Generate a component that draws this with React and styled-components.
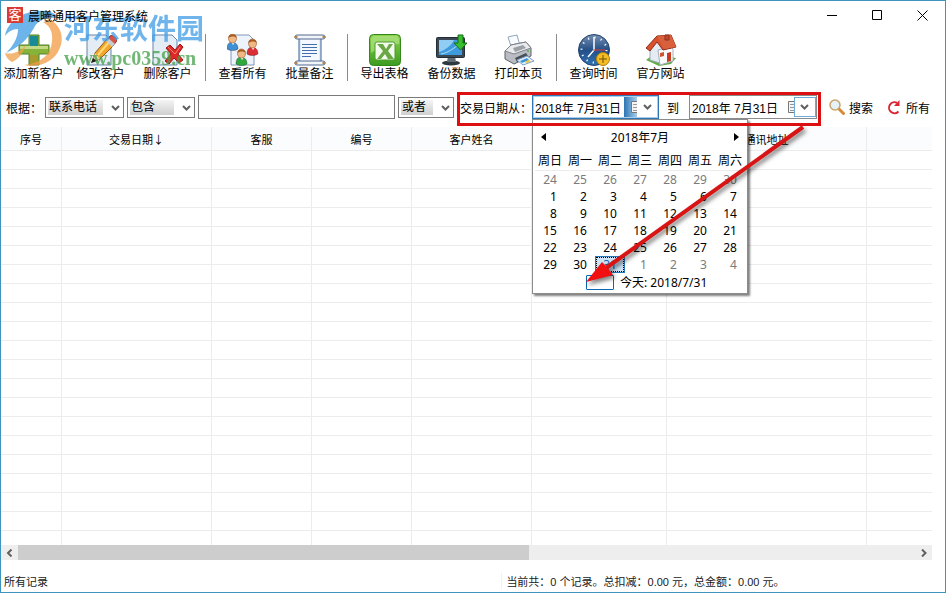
import React from 'react'
import styled, { createGlobalStyle, css } from 'styled-components'

const GlobalStyle = createGlobalStyle`
  * {
    box-sizing: border-box;
  }
  body {
    margin: 0;
    background: #fff;
    color: #000;
    font-family: 'Liberation Sans', 'Noto Sans CJK SC', sans-serif;
    font-size: 12px;
  }
  button, input, select {
    font: inherit;
    color: inherit;
  }
`

const Window = styled.div`
  display: flex;
  flex-direction: column;
  height: 100vh;
  background: #fff;
  outline: 1px solid #3f94bd;
  outline-offset: -1px;
  overflow: hidden;
  position: relative;
`

const TitleBar = styled.header`
  position: relative;
  z-index: 1;
  display: flex;
  align-items: center;
  height: 30px;
  padding: 0 1px 0 7px;
  flex-shrink: 0;
`

const AppBadge = styled.span`
  width: 16px;
  height: 16px;
  margin-right: 5px;
  background: #d93a36;
  color: #fff;
  font-size: 13px;
  line-height: 16px;
  text-align: center;
`

const Title = styled.h1`
  flex: 1;
  margin: 0;
  font-size: 12px;
  font-weight: 400;
`

const plainButton = css`
  padding: 0;
  border: 0;
  background: none;
  cursor: pointer;
`

const CaptionButton = styled.button`
  ${plainButton}
  width: 45px;
  height: 30px;

  svg {
    display: block;
    margin: auto;
  }
`

const ToolBar = styled.nav`
  display: flex;
  height: 56px;
  flex-shrink: 0;
`

const ToolButton = styled.button`
  ${plainButton}
  display: flex;
  flex-direction: column;
  align-items: center;
  width: 67px;
  padding-top: 4px;
  line-height: 17px;
  white-space: nowrap;
`

const ToolSeparator = styled.span`
  width: 1px;
  height: 47px;
  margin: 4px 3px 0 4px;
  background: #8a8a8a;
`

const Watermark = styled.div`
  position: absolute;
  top: 8px;
  left: 4px;
  display: flex;
  pointer-events: none;
  opacity: 0.75;
`

const WatermarkText = styled.div`
  display: flex;
  flex-direction: column;
  padding-top: 4px;
  margin-left: 2px;
  color: #3f9de6;
  font-size: 28px;
  font-weight: 700;
  line-height: 36px;

  small {
    color: #43a047;
    font: bold 20px/20px 'Liberation Serif', serif;
  }
`

const FilterBar = styled.form`
  display: flex;
  align-items: center;
  gap: 3px;
  height: 34px;
  margin: 6px 0 1px;
  padding: 0 11px 4px 6px;
  flex-shrink: 0;
  white-space: nowrap;
`

const SelectBox = styled.span`
  position: relative;
  width: ${({ $width }) => $width}px;
  height: 21px;

  select {
    appearance: none;
    width: 100%;
    height: 100%;
    padding: 0 3px;
    border: 1px solid #7a7a7a;
    border-radius: 0;
    background: linear-gradient(#f4f4f4, #cfcfcf) 2px 2px / calc(100% - 22px) 15px no-repeat #fff;
  }

  svg {
    position: absolute;
    top: 7px;
    right: 4px;
    pointer-events: none;
  }
`

const Keyword = styled.input`
  flex: 1;
  min-width: 60px;
  height: 24px;
  padding: 0 4px;
  border: 1px solid #7a7a7a;
`

const DateRange = styled.fieldset`
  position: relative;
  display: flex;
  align-items: center;
  height: 30px;
  margin: 0;
  padding: 0 4px 0 3px;
  border: 0;

  &::after {
    content: '';
    position: absolute;
    inset: 0 0 -4px;
    z-index: 3;
    border: 3px solid #dc1010;
    pointer-events: none;
  }
`

const RangeLabel = styled.label`
  margin: ${({ $between }) => ($between ? '0 10px 0 8px' : 0)};
`

const DateField = styled.span`
  position: relative;
  display: flex;
  align-items: center;
  height: 24px;
  border: 1px solid ${({ $open }) => ($open ? '#2f78b7' : '#8b8b8b')};
  box-shadow: inset 0 0 0 1px ${({ $open }) => ($open ? '#a9cdea' : '#fff')};

  input {
    width: ${({ $open }) => ($open ? 91 : 98)}px;
    height: 18px;
    padding: 0 0 0 2px;
    border: 0;
    outline: 0;
    background: none;
  }
`

const DateToggle = styled.button`
  ${plainButton}
  display: flex;
  align-items: center;
  height: 20px;
`

const CalendarSlot = styled.span`
  display: flex;
  align-items: center;
  justify-content: flex-end;
  width: ${({ $open }) => ($open ? 13 : 6)}px;
  height: 20px;
  overflow: hidden;
  background: ${({ $open }) => ($open ? 'linear-gradient(90deg, #2d75b3, #a8cdea)' : '#fff')};
`

const ArrowSlot = styled.span`
  display: flex;
  align-items: center;
  justify-content: center;
  width: ${({ $open }) => ($open ? 21 : 22)}px;
  height: 20px;
  border: ${({ $open }) => ($open ? 0 : '1px solid #6ea9d8')};
`

const LinkButton = styled.button`
  ${plainButton}
  display: flex;
  align-items: center;
  gap: 4px;
  padding: 0 5px;
`

const Popup = styled.div`
  position: absolute;
  top: 23px;
  left: -1px;
  z-index: 2;
  width: 216px;
  padding: 8px 2px 2px;
  border: 1px solid #8c8c8c;
  background: #fff;
  box-shadow: 2px 2px 2px rgba(0, 0, 0, 0.5);
  font-family: 'Noto Sans', 'Noto Sans CJK SC', sans-serif;
`

const MonthBar = styled.div`
  display: flex;
  align-items: center;
  justify-content: space-between;
  height: 18px;
  margin-bottom: 6px;
  padding: 0 6px;

  button {
    ${plainButton}
    display: flex;
  }
`

const MonthTable = styled.table`
  width: 100%;
  table-layout: fixed;
  border-collapse: separate;
  border-spacing: 0;

  th {
    height: 19px;
    padding: 0;
    border-bottom: 1px solid #ececec;
    font-weight: 400;
    line-height: 18px;
  }
`

const Day = styled.td`
  height: 17px;
  padding: 0 8px 0 0;
  line-height: 17px;
  text-align: right;
  color: ${({ $muted }) => ($muted ? '#7b7b7b' : '#000')};
  ${({ $selected }) =>
    $selected &&
    css`
      background: #cfe3f6;
      color: #1264ab;
      box-shadow: inset 0 0 0 1px #2a78b8;
      outline: 1px dotted #000;
      outline-offset: -2px;
    `}
`

const Today = styled.button`
  ${plainButton}
  display: flex;
  align-items: center;
  gap: 6px;
  height: 18px;
  padding-left: 51px;

  i {
    width: 28px;
    height: 15px;
    border: 1px solid #0b67b2;
    border-radius: 1px;
  }
`

const Pointer = styled.svg`
  position: absolute;
  top: -1px;
  left: -1px;
  z-index: 4;
  overflow: visible;
  pointer-events: none;
  filter: drop-shadow(2px 3px 2px rgba(0, 0, 0, 0.5));
`

const GridArea = styled.main`
  flex: 1;
  min-height: 0;
  margin: 0 14px 0 1px;
  overflow: hidden;
`

const RecordTable = styled.table`
  width: 100%;
  table-layout: fixed;
  border-collapse: separate;
  border-spacing: 0;
  font-size: 11px;

  th,
  td {
    height: 19px;
    padding: 0;
    border-right: 1px solid #ececec;
    border-bottom: 1px solid #ececec;
  }
  th:last-child,
  td:last-child {
    border-right: 0;
  }
  th {
    height: 24px;
    background: #fafcfd;
    font-family: 'Noto Sans CJK SC', sans-serif;
    font-weight: 400;
    line-height: 16px;
  }
`

const ScrollTrack = styled.div`
  display: flex;
  height: 15px;
  margin: 0 14px 0 1px;
  flex-shrink: 0;
  background: #eee;

  button {
    ${plainButton}
    display: flex;
    align-items: center;
    justify-content: center;
    width: 17px;
  }
`

const ScrollRoom = styled.div`
  flex: 1;
`

const ScrollThumb = styled.div`
  width: 57%;
  height: 100%;
  background: #cdcdcd;
`

const StatusBar = styled.footer`
  display: flex;
  align-items: center;
  height: 33px;
  padding-top: 9px;
  flex-shrink: 0;
  font-size: 11px;
  color: #1a1a1a;
`

const StatusCell = styled.span`
  flex: ${({ $grow }) => ($grow ? '1' : '0 0 53%')};
  padding-left: 4px;
  border-left: ${({ $grow }) => ($grow ? '1px solid #f0f0f0' : 0)};
  white-space: nowrap;
`

function Icon({ children }) {
  return (
    <svg width="32" height="32" viewBox="0 0 32 32" aria-hidden="true">
      {children}
    </svg>
  )
}

const Chevron = ({ dir = 'down' }) => (
  <svg width="9" height="8" viewBox="0 0 9 8" fill="none" stroke="#606060" strokeWidth="2" aria-hidden="true">
    {dir === 'down' && <path d="M1 2l3.5 3.5L8 2" />}
    {dir === 'left' && <path d="M6.500 0.500L3 4l3.500 3.500" />}
    {dir === 'right' && <path d="M3 0.500L6.500 4L3 7.500" />}
  </svg>
)

const Page = () => <path d="M4 1h18l5 5v25H4z" fill="#edf3fa" stroke="#8098b8" />

const AddIcon = () => (
  <Icon>
    <path d="M11 1h10v10h10v9H21v11H11V20H1v-9h10z" fill="#86b43a" stroke="#53802a" />
    <path d="M12 2h8v10h-8z" fill="#198b96" />
    <path d="M2 12h28v3H2z" fill="#c4d986" />
    <path d="M12 21h8v9h-8z" fill="#a89b2e" />
  </Icon>
)

const EditIcon = () => (
  <Icon>
    <path d="M2 1h19l5 5v25H2z" fill="#e4ecf6" stroke="#6683a8" />
    <path d="M7 28l3-9L22 5l7 6-14 14z" fill="#f4a62b" stroke="#8c5a17" />
    <path d="M13 21L25 7" stroke="#ffd979" strokeWidth="2" />
    <path d="M22 6l3-4c2-2 9 3 6 6l-3 4z" fill="#d85446" stroke="#943229" />
    <path d="M21 7l2-3 7 6-3 3z" fill="#c6ccd4" />
    <path d="M7 28l3-9 5 6z" fill="#f4d9ae" />
    <path d="M6 29l2-5 4 3z" fill="#222" />
  </Icon>
)

const DeleteIcon = () => (
  <Icon>
    <path d="M1 1h19l5 5v25H1z" fill="#e4ecf6" stroke="#6683a8" />
    <path d="M14 14l4-3 5 5 5-6 3 3-5 7 5 6-4 3-5-5-5 6-4-3 6-7z" fill="#df2926" stroke="#9d1515" />
    <path d="M16 13l7 7 5-7" stroke="#f58075" fill="none" />
  </Icon>
)

const Person = ({ x, y, color }) => (
  <g transform={`translate(${x} ${y})`}>
    <path d="M0 15c0-5 2-7 5-7s6 2 6 7c-3 2-8 2-11 0z" fill={color} stroke="#0004" />
    <path d="M4 8l2 3 2-3z" fill="#fff" />
    <ellipse cx="5.500" cy="4.500" rx="4" ry="4.500" fill="#f2b883" stroke="#93542a" strokeWidth="0.600" />
    <path d="M1.500 4C1-1 10-1 9.500 4 8 2 4 2 1.500 4z" fill="#a85c22" />
  </g>
)

const PeopleIcon = () => (
  <Icon>
    <Page />
    <Person x="0" y="0" color="#3f8fd5" />
    <Person x="20" y="5" color="#dc2f35" />
    <Person x="9" y="15" color="#2fa83e" />
  </Icon>
)

const ScrollIcon = () => (
  <Icon>
    <path d="M5 4h22v24H5z" fill="#dceafb" stroke="#3d5f92" />
    <path d="M7 4h18v23H7z" fill="#f5f9ff" />
    <rect x="1" y="1" width="30" height="4" rx="2" fill="#f1f4f8" stroke="#52698f" />
    <rect x="1" y="27" width="30" height="4" rx="2" fill="#f1f4f8" stroke="#52698f" />
    <path d="M2 2v2M30 2v2M2 28v2M30 28v2" stroke="#b6824d" strokeWidth="3" />
    <path d="M8 10.500h15M8 13.500h15M8 16.500h15M8 19.500h15M8 22.500h9" stroke="#416faf" />
  </Icon>
)

const ExcelIcon = () => (
  <Icon>
    <defs>
      <linearGradient id="excel" x2="0" y2="1">
        <stop stopColor="#8bd34b" />
        <stop offset="1" stopColor="#3c9b20" />
      </linearGradient>
    </defs>
    <rect x="0.500" y="0.500" width="31" height="31" rx="4" fill="url(#excel)" stroke="#328818" />
    <path d="M2 6c0-3 2-4 4-4h20c3 0 4 2 4 4v4C20 10 10 13 2 19z" fill="#b9e78e" opacity="0.6" />
    <rect x="6" y="8" width="20" height="18" rx="2" fill="#f5faef" stroke="#4c9d2a" />
    <path d="M8 10h6l3 5 3-5h4l-5 7 6 8h-6l-3-5-4 5H8l6-8z" fill="#6aa845" />
  </Icon>
)

const BackupIcon = () => (
  <Icon>
    <ellipse cx="15" cy="29" rx="9" ry="2.500" fill="#30383f" />
    <path d="M12 22h7l1 6h-9z" fill="#606b76" />
    <rect x="0.500" y="3.500" width="28" height="20" rx="1" fill="#3b4753" stroke="#222d37" />
    <path d="M3 6h23v15H3z" fill="#3d9bdd" />
    <path d="M3 6h15C15 12 9 16 3 18z" fill="#91ccf4" />
    <path d="M5 20c6-1 13-5 20-12" stroke="#b8e1fb" fill="none" />
    <path d="M22 1h5v8h4l-6.500 7-6.500-7h4z" fill="#37bd2e" stroke="#166e18" />
  </Icon>
)

const PrinterIcon = () => (
  <Icon>
    <path d="M5 3l9-2 3 11-8 3z" fill="#f8fbff" stroke="#92a5bc" />
    <path d="M2 17l6-6 15-3 5 6v8l-17 8-9-5z" fill="#b9bdc3" stroke="#5b626b" />
    <path d="M2 17l6-6 15-3 5 6-17 6z" fill="#e9ebee" stroke="#7d838a" />
    <path d="M10 14l10-3 3 3-11 4z" fill="#9ba0a6" />
    <path d="M12 24l11-5 2 3-11 6z" fill="#474e56" />
    <path d="M14 26l10-4 7 5-11 4z" fill="#e6f2ff" stroke="#7d9fc5" />
    <path d="M17 27l7-3 2 2-7 3z" fill="#3e94d8" />
    <path d="M22 28l3-2 3 1-4 2z" fill="#e8c532" />
    <circle cx="25" cy="17" r="1" fill="#55b43c" />
  </Icon>
)

const ClockIcon = () => (
  <Icon>
    <defs>
      <linearGradient id="clock" x2="0" y2="1">
        <stop stopColor="#7790b3" />
        <stop offset="0.5" stopColor="#244f86" />
        <stop offset="1" stopColor="#2e73b4" />
      </linearGradient>
    </defs>
    <circle cx="16" cy="16" r="15.500" fill="url(#clock)" stroke="#23446f" />
    <circle cx="16" cy="16" r="12.500" fill="none" stroke="#fff" strokeWidth="2" strokeDasharray="1.200 5.345" />
    <path d="M16 3v13l-6 7" stroke="#fff" strokeWidth="1.500" fill="none" />
    <path d="M15 16h12" stroke="#e23b3b" />
    <circle cx="25" cy="25" r="6.500" fill="#f5bd22" stroke="#b3800b" />
    <path d="M25 21v8M21 25h8" stroke="#6d5110" />
  </Icon>
)

const HouseIcon = () => (
  <Icon>
    <path d="M1 26l8-6 22 4-5 6-12 2z" fill="#63ad48" />
    <path d="M5 15l8-9 5 10v14L5 26z" fill="#e4ebf2" stroke="#9dabb8" />
    <path d="M13 16l13-3 2 2v12l-13 4z" fill="#f9fbfd" stroke="#a4b0bb" />
    <path d="M1 14L12 2l14-1 5 12-13 3-6-8-7 9z" fill="#d8512d" stroke="#912c18" />
    <path d="M12 2l7 13 12-2-5-12z" fill="#d9603c" />
    <path d="M20 1h4v5h-4z" fill="#c54729" stroke="#8b3120" />
    <path d="M22 19l4-1v9l-4 1z" fill="#c93c22" />
    <path d="M15 19l4-1v4l-4 1z" fill="#d2532e" />
  </Icon>
)

const toolGroups = [
  [
    ['添加新客户', AddIcon],
    ['修改客户', EditIcon],
    ['删除客户', DeleteIcon],
  ],
  [
    ['查看所有', PeopleIcon],
    ['批量备注', ScrollIcon],
  ],
  [
    ['导出表格', ExcelIcon],
    ['备份数据', BackupIcon],
    ['打印本页', PrinterIcon],
  ],
  [
    ['查询时间', ClockIcon],
    ['官方网站', HouseIcon],
  ],
]

const columns = [
  ['序号', 61],
  ['交易日期↓', 150],
  ['客服', 100],
  ['编号', 100],
  ['客户姓名', 120],
  ['', 135],
  ['通讯地址', 200],
  ['', null],
]

const weekdays = ['周日', '周一', '周二', '周三', '周四', '周五', '周六']

// July 2018 starts on a Sunday, so the sheet opens with the last week of June
const weeks = Array.from({ length: 6 }, (_, w) =>
  weekdays.map((_, d) => {
    const n = w * 7 + d - 6
    if (n < 1) return { label: n + 30, muted: true }
    if (n > 31) return { label: n - 31, muted: true }
    return { label: n, selected: n === 31 }
  })
)

function Select({ label, width, options }) {
  return (
    <SelectBox $width={width}>
      <select aria-label={label} defaultValue={options[0]}>
        {options.map((o) => (
          <option key={o}>{o}</option>
        ))}
      </select>
      <Chevron />
    </SelectBox>
  )
}

function Calendar() {
  return (
    <Popup>
      <MonthBar>
        <button type="button" aria-label="上个月">
          <svg width="5" height="8">
            <path d="M5 0v8L0 4z" />
          </svg>
        </button>
        <span>2018年7月</span>
        <button type="button" aria-label="下个月">
          <svg width="5" height="8">
            <path d="M0 0v8l5-4z" />
          </svg>
        </button>
      </MonthBar>
      <MonthTable>
        <thead>
          <tr>
            {weekdays.map((d) => (
              <th key={d}>{d}</th>
            ))}
          </tr>
        </thead>
        <tbody>
          {weeks.map((week, i) => (
            <tr key={i}>
              {week.map((day) => (
                <Day key={day.label} $muted={day.muted} $selected={day.selected}>
                  {day.label}
                </Day>
              ))}
            </tr>
          ))}
        </tbody>
      </MonthTable>
      <Today type="button">
        <i />
        今天: 2018/7/31
      </Today>
      <Pointer width="216" height="176" aria-hidden="true">
        <path d="M271 8L74 149" stroke="#d81414" strokeWidth="4" />
        <path d="M54 163L70 143L75 148L81 156z" fill="#f01010" />
      </Pointer>
    </Popup>
  )
}

function DatePicker({ id, open }) {
  return (
    <DateField $open={open}>
      <input id={id} defaultValue="2018年 7月31日" />
      <DateToggle type="button" aria-label="选择日期">
        <CalendarSlot $open={open}>
          <svg width="6" height="12" viewBox="0 0 6 12">
            <path d="M6 0.500H0.500v11H6" fill="#f4f4f4" stroke="#777" />
            <path d="M2 3.500h4M2 6.500h4M2 9.500h4" stroke="#999" />
          </svg>
        </CalendarSlot>
        <ArrowSlot $open={open}>
          <Chevron />
        </ArrowSlot>
      </DateToggle>
      {open && <Calendar />}
    </DateField>
  )
}

function SiteMark() {
  return (
    <Watermark>
      <svg width="58" height="60" viewBox="4 8 58 60" aria-hidden="true">
        <path
          d="M5 36C7 23 20 12 39 11c9-1 17 2 21 8-11-3-20 0-25 7-5 9-10 18-29 27 9-9 12-17 12-24-6 0-10 3-13 7z"
          fill="#3c9ce2"
        />
        <path d="M51 20c11 7 14 20 7 32-7 11-20 16-34 13 18-2 27-11 28-24 1-9-2-15-9-19z" fill="#f39b45" />
        <path d="M5 53c7 2 15-1 21-8-3 8-7 14-14 17-4-2-6-5-7-9z" fill="#f0a04b" />
      </svg>
      <WatermarkText>
        河东软件园
        <small>www.pc0359.cn</small>
      </WatermarkText>
    </Watermark>
  )
}

export default function App() {
  return (
    <>
      <GlobalStyle />
      <Window>
        <TitleBar>
          <AppBadge>客</AppBadge>
          <Title>晨曦通用客户管理系统</Title>
          <CaptionButton aria-label="最小化">
            <svg width="11" height="11">
              <path d="M0 5.500h10" stroke="#000" />
            </svg>
          </CaptionButton>
          <CaptionButton aria-label="最大化">
            <svg width="11" height="11">
              <path d="M0.500 0.500h9v9h-9z" fill="none" stroke="#000" />
            </svg>
          </CaptionButton>
          <CaptionButton aria-label="关闭">
            <svg width="11" height="11">
              <path d="M0.500 0.500l10 10M10.500 0.500l-10 10" stroke="#000" />
            </svg>
          </CaptionButton>
        </TitleBar>

        <ToolBar>
          {toolGroups.map((group, i) => (
            <React.Fragment key={i}>
              {i > 0 && <ToolSeparator />}
              {group.map(([label, Glyph]) => (
                <ToolButton key={label}>
                  <Glyph />
                  {label}
                </ToolButton>
              ))}
            </React.Fragment>
          ))}
        </ToolBar>

        <FilterBar>
          <label htmlFor="keyword">根据：</label>
          <Select label="字段" width={79} options={['联系电话', '客户姓名']} />
          <Select label="条件" width={68} options={['包含', '等于']} />
          <Keyword id="keyword" />
          <Select label="关系" width={56} options={['或者', '并且']} />
          <DateRange>
            <RangeLabel htmlFor="from">交易日期从：</RangeLabel>
            <DatePicker id="from" open />
            <RangeLabel htmlFor="to" $between>
              到
            </RangeLabel>
            <DatePicker id="to" />
          </DateRange>
          <LinkButton type="button">
            <svg width="16" height="16" viewBox="0 0 16 16" aria-hidden="true">
              <path d="M9.500 9.500l5 5" stroke="#d98a35" strokeWidth="3" strokeLinecap="round" />
              <circle cx="6" cy="6" r="5" fill="#e6f1f8" stroke="#c9a56c" strokeWidth="1.500" />
            </svg>
            搜索
          </LinkButton>
          <LinkButton type="button">
            <svg width="16" height="16" viewBox="0 0 16 16" aria-hidden="true">
              <path d="M11 3.800A5.500 5.500 0 1 0 12.500 12.500" fill="none" stroke="#dd2233" strokeWidth="2" />
              <path d="M13.500 1v6H8z" fill="#dd2233" />
            </svg>
            所有
          </LinkButton>
        </FilterBar>

        <GridArea>
          <RecordTable>
            <colgroup>
              {columns.map(([, width], i) => (
                <col key={i} width={width ?? undefined} />
              ))}
            </colgroup>
            <thead>
              <tr>
                {columns.map(([name], i) => (
                  <th key={i}>{name}</th>
                ))}
              </tr>
            </thead>
            <tbody>
              {Array.from({ length: 60 }, (_, r) => (
                <tr key={r}>
                  {columns.map((_, c) => (
                    <td key={c} />
                  ))}
                </tr>
              ))}
            </tbody>
          </RecordTable>
        </GridArea>

        <ScrollTrack>
          <button aria-label="向左滚动">
            <Chevron dir="left" />
          </button>
          <ScrollRoom>
            <ScrollThumb />
          </ScrollRoom>
          <button aria-label="向右滚动">
            <Chevron dir="right" />
          </button>
        </ScrollTrack>

        <StatusBar>
          <StatusCell>所有记录</StatusCell>
          <StatusCell $grow>当前共：0 个记录。总扣减：0.00 元，总金额：0.00 元。</StatusCell>
        </StatusBar>

        <SiteMark />
      </Window>
    </>
  )
}
